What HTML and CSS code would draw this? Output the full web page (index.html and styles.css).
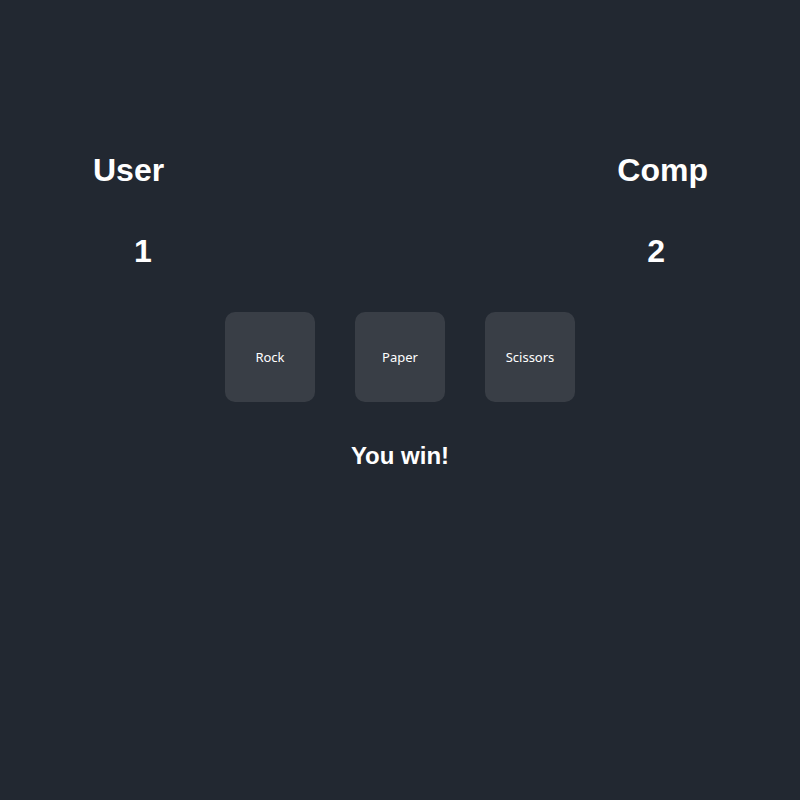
FILE: index.html
```html
<!DOCTYPE html>
<html>
<head>
<meta charset="utf-8">
<link rel="stylesheet" href="styles.css">
</head>
<body>
<main class="game">
  <div class="names">
    <h1 class="name">User</h1>
    <h1 class="name">Comp</h1>
  </div>
  <div class="scores">
    <div class="score">1</div>
    <div class="score">2</div>
  </div>
  <div class="choices">
    <button class="choice">Rock</button>
    <button class="choice">Paper</button>
    <button class="choice">Scissors</button>
  </div>
  <h2 class="result">You win!</h2>
</main>
</body>
</html>
```

FILE: styles.css
```css
html, body {
  margin: 0;
  padding: 0;
  background: #222831;
  height: 100%;
}
body {
  font-family: "Liberation Sans", Arial, sans-serif;
  color: #ffffff;
}
.game {
  padding-top: 152px;
  display: flex;
  flex-direction: column;
}
.names {
  display: flex;
  justify-content: space-between;
  padding: 0 92px 0 93px;
}
.name {
  margin: 0;
  font-size: 32px;
  font-weight: bold;
  line-height: 37px;
}
.scores {
  display: flex;
  justify-content: space-between;
  padding: 0 135px 0 134px;
  margin-top: 44px;
}
.score {
  font-size: 32px;
  font-weight: bold;
  line-height: 37px;
}
.choices {
  display: flex;
  justify-content: center;
  gap: 40px;
  margin-top: 42px;
}
.choice {
  width: 90px;
  height: 90px;
  border: none;
  border-radius: 10px;
  background: #393e46;
  color: #ffffff;
  font-family: "Noto Sans", "Open Sans", sans-serif;
  font-size: 13px;
  padding: 0;
}
.result {
  margin: 40px 0 0;
  text-align: center;
  font-size: 24px;
  font-weight: bold;
  line-height: 28px;
}
```
